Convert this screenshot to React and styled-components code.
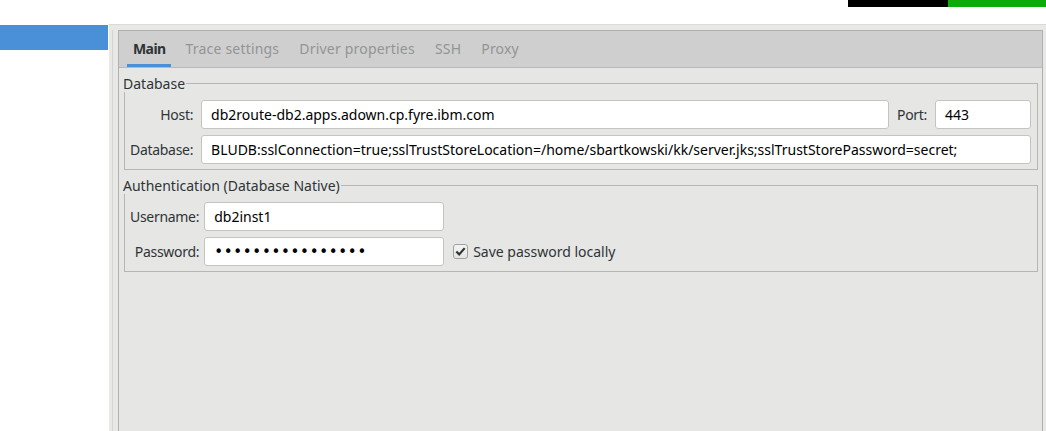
import React from 'react';
import styled, { createGlobalStyle } from 'styled-components';

const GlobalStyle = createGlobalStyle`
  html, body {
    margin: 0;
    padding: 0;
    background: #ffffff;
  }
  body {
    font-family: "Noto Sans", "Open Sans", sans-serif;
    font-size: 14px;
    color: #2e3436;
  }
`;

const TABS = ['Main', 'Trace settings', 'Driver properties', 'SSH', 'Proxy'];

const Checkmark = () => (
  <svg width="11" height="11" viewBox="0 0 11 11">
    <path d="M1.4 5.4 L4.2 8.4 L9.7 2.1" fill="none" stroke="#2e3436" strokeWidth="2.2" />
  </svg>
);

const App = () => {
  return (
    <>
      <GlobalStyle />
      <Window>
        <TopBar>
          <Meter>
            <MeterPart width={100} color="#000000" />
            <MeterPart width={98} color="#0aab0a" />
          </Meter>
        </TopBar>
        <Body>
          <Sidebar>
            <SidebarItem />
          </Sidebar>
          <Pane>
            <PaneInner>
              <TabFolder>
                <TabBar>
                  {TABS.map((t, i) => (
                    <Tab key={t} active={i === 0}>
                      {t}
                    </Tab>
                  ))}
                </TabBar>
                <TabContent>
                  <Group>
                    <GroupTitle>Database</GroupTitle>
                    <GroupBody>
                      <FormGrid columns="auto 1fr auto 96px" gap={8}>
                        <Label>Host:</Label>
                        <Field>db2route-db2.apps.adown.cp.fyre.ibm.com</Field>
                        <Label>Port:</Label>
                        <Field>443</Field>
                        <Label>Database:</Label>
                        <Field span={3}>
                          BLUDB:sslConnection=true;sslTrustStoreLocation=/home/sbartkowski/kk/server.jks;sslTrustStorePassword=secret;
                        </Field>
                      </FormGrid>
                    </GroupBody>
                  </Group>
                  <Group>
                    <GroupTitle>Authentication (Database Native)</GroupTitle>
                    <GroupBody>
                      <FormGrid columns="auto 240px auto 1fr" gap={5}>
                        <Label>Username:</Label>
                        <Field>db2inst1</Field>
                        <span />
                        <span />
                        <Label>Password:</Label>
                        <Field>
                          <Dots>{'•'.repeat(16)}</Dots>
                        </Field>
                        <CheckRow>
                          <CheckBox>
                            <Checkmark />
                          </CheckBox>
                          Save password locally
                        </CheckRow>
                        <span />
                      </FormGrid>
                    </GroupBody>
                  </Group>
                </TabContent>
              </TabFolder>
            </PaneInner>
          </Pane>
        </Body>
      </Window>
    </>
  );
};

export default App;

const Window = styled.div`
  display: flex;
  flex-direction: column;
  width: 1046px;
  height: 431px;
  overflow: hidden;
`;

const TopBar = styled.div`
  display: flex;
  justify-content: flex-end;
  height: 24px;
  background: #ffffff;
`;

const Meter = styled.div`
  display: flex;
  height: 7px;
`;

const MeterPart = styled.div`
  width: ${(p) => p.width}px;
  background: ${(p) => p.color};
`;

const Body = styled.div`
  display: flex;
  flex: 1;
  min-height: 0;
`;

const Sidebar = styled.div`
  width: 109px;
  padding-top: 1px;
  background: #ffffff;
`;

const SidebarItem = styled.div`
  height: 25px;
  width: 108px;
  background: #4a90d9;
`;

const Pane = styled.div`
  flex: 1;
  display: flex;
  background: #e8e8e7;
  border-top: 1px solid #dadad8;
  padding: 5px 3px 0 3px;
`;

const PaneInner = styled.div`
  flex: 1;
  display: flex;
  border-left: 1px solid #d4d4d2;
  padding-left: 5px;
`;

const TabFolder = styled.div`
  flex: 1;
  display: flex;
  flex-direction: column;
  border: 1px solid #b0b0ae;
  border-bottom: none;
  background: #e6e6e5;
`;

const TabBar = styled.div`
  display: flex;
  gap: 8px;
  height: 36px;
  padding-left: 8px;
  background: #cfcfcf;
  border-bottom: 1px solid #b9b9b7;
`;

const Tab = styled.div`
  display: flex;
  align-items: center;
  padding: 1px 6px 0 6px;
  font-weight: ${(p) => (p.active ? 700 : 400)};
  color: ${(p) => (p.active ? '#2e3436' : '#929595')};
  border-bottom: 3px solid ${(p) => (p.active ? '#4a90d9' : 'transparent')};
  letter-spacing: ${(p) => (p.active ? '-0.6px' : '0.2px')};
`;

const TabContent = styled.div`
  display: flex;
  flex-direction: column;
  gap: 8px;
  padding: 8px 4px 0 5px;
`;

const Group = styled.div`
  display: flex;
  flex-direction: column;
`;

const GroupTitle = styled.div`
  display: flex;
  line-height: 16px;
  color: #2e3436;
  margin-left: -1px;

  &::after {
    content: '';
    flex: 1;
    align-self: flex-end;
    height: 8px;
    margin-left: 1px;
    border-top: 1px solid #b6b6b3;
    border-right: 1px solid #b6b6b3;
  }
`;

const GroupBody = styled.div`
  border: 1px solid #b6b6b3;
  border-top: none;
  padding: 8px 6px 5px 5px;
`;

const FormGrid = styled.div`
  display: grid;
  grid-template-columns: ${(p) => p.columns};
  column-gap: ${(p) => p.gap}px;
  row-gap: 6px;
  align-items: center;
`;

const Label = styled.div`
  justify-self: end;
  color: #2e3436;
  letter-spacing: -0.3px;
`;

const Field = styled.div`
  grid-column: ${(p) => (p.span ? `span ${p.span}` : 'auto')};
  height: 29px;
  box-sizing: border-box;
  display: flex;
  align-items: center;
  padding: 0 9px;
  background: #ffffff;
  border: 1px solid #c4c4c1;
  border-radius: 3px;
  color: #000000;
  white-space: nowrap;
  overflow: hidden;
`;

const Dots = styled.span`
  font-family: "DejaVu Sans", sans-serif;
  font-size: 15px;
  letter-spacing: 0.7px;
  color: #000000;
`;

const CheckRow = styled.label`
  display: flex;
  align-items: center;
  gap: 5px;
  margin-left: 4px;
  color: #2e3436;
`;

const CheckBox = styled.span`
  display: flex;
  align-items: center;
  justify-content: center;
  width: 15px;
  height: 15px;
  box-sizing: border-box;
  border: 1px solid #a1a19e;
  border-radius: 3px;
  background: linear-gradient(#f4f4f3, #e4e4e2);
`;
